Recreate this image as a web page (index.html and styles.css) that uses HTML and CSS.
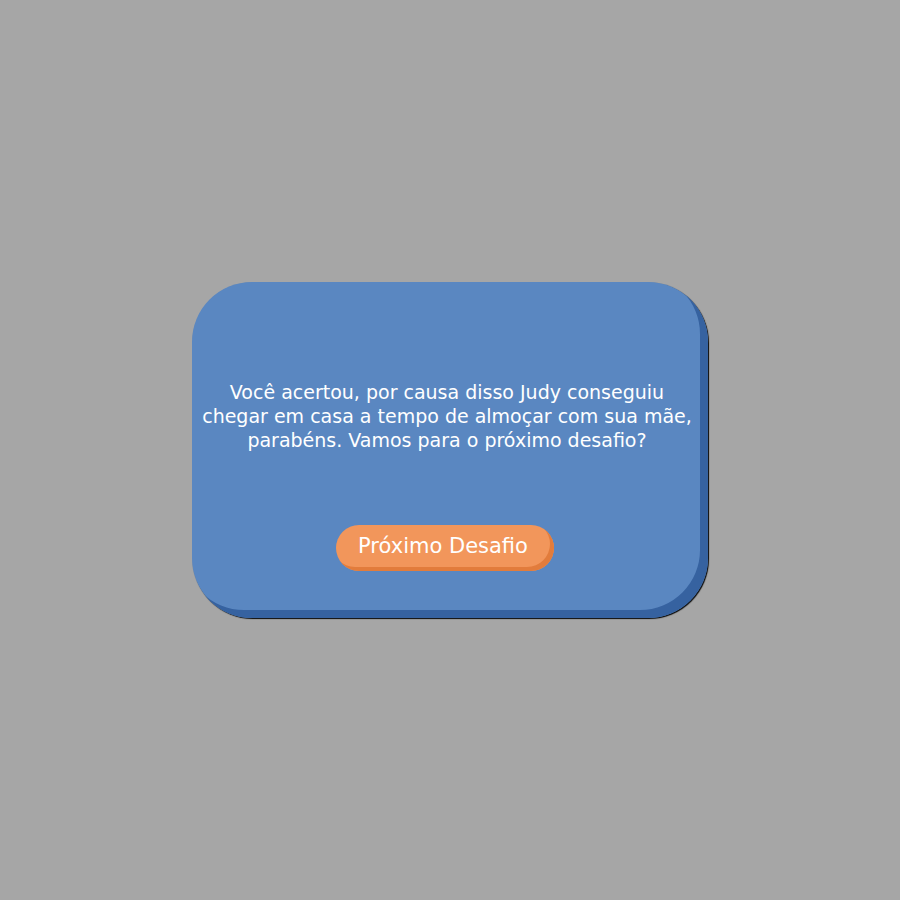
FILE: index.html
```html
<!DOCTYPE html>
<html lang="pt-BR">
<head>
<meta charset="utf-8">
<title>Desafio</title>
<link rel="stylesheet" href="styles.css">
</head>
<body>
<main class="stage">
  <section class="card">
    <p class="message">Você acertou, por causa disso Judy conseguiu<br>chegar em casa a tempo de almoçar com sua mãe,<br>parabéns. Vamos para o próximo desafio?</p>
    <button class="next-btn" type="button">Próximo Desafio</button>
  </section>
</main>
</body>
</html>
```

FILE: styles.css
```css
* { box-sizing: border-box; }
html, body {
  margin: 0;
  padding: 0;
  height: 100%;
}
body {
  background: #a6a6a6;
  font-family: "DejaVu Sans", "Open Sans", sans-serif;
}
.stage {
  height: 900px;
  display: flex;
  align-items: center;
  justify-content: center;
}
.card {
  width: 516px;
  height: 336px;
  background: #5a87c1;
  border-radius: 60px;
  box-shadow: inset -8px -8px 0 #3662a0, 1px 1px 1px rgba(0,0,0,0.95);
  display: flex;
  flex-direction: column;
  align-items: center;
  padding: 98px 6px 0 0;
}
.message {
  margin: 0;
  color: #ffffff;
  font-size: 19px;
  line-height: 24px;
  text-align: center;
  white-space: nowrap;
}
.next-btn {
  margin: 73px 4px 0 0;
  width: 218px;
  height: 46px;
  border: 0;
  border-radius: 23px;
  background: #f2965b;
  box-shadow: inset -4px -4px 0 #e27c3c;
  color: #ffffff;
  font-family: "DejaVu Sans", "Open Sans", sans-serif;
  font-size: 21px;
  padding: 0 4px 4px 0;
  cursor: pointer;
}
```
